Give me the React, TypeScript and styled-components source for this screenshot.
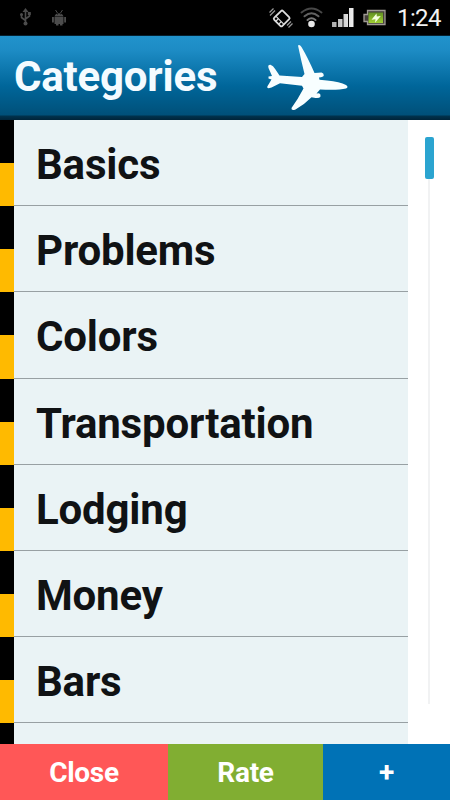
import React from "react";
import styled, { createGlobalStyle } from "styled-components";

const Global = createGlobalStyle`
  * { box-sizing: border-box; }
  html, body { margin: 0; padding: 0; background: #fff; }
  body { font-family: Roboto, "Liberation Sans", sans-serif; overflow: hidden; }
`;

const Screen = styled.div`
  width: 450px;
  height: 800px;
  display: flex;
  flex-direction: column;
  overflow: hidden;
`;

const StatusBar = styled.div`
  flex: none;
  height: 36px;
  background: #000;
  display: flex;
  align-items: center;
  justify-content: space-between;
  border-bottom: 1px solid #06202f;
`;

const Tray = styled.div`
  display: flex;
  align-items: center;
`;

const Glyph = styled.svg`
  display: block;
  flex: none;
`;

const Clock = styled.span`
  color: #f2f2f2;
  font-size: 24px;
  line-height: 36px;
  width: 44px;
  margin-left: 10px;
  margin-right: 9px;
  padding-top: 1px;
  white-space: nowrap;
  letter-spacing: -0.6px;
`;

const Header = styled.header`
  flex: none;
  height: 84px;
  display: flex;
  align-items: flex-start;
  background: linear-gradient(#2193cc 0, #1d8cc5 14px, #00669a 50px, #005079 79px, #00324d 80px, #002439 84px);
`;

const Title = styled.h1`
  margin: 0 0 0 14px;
  width: 252px;
  font-size: 42px;
  line-height: 82px;
  font-weight: 700;
  letter-spacing: -0.2px;
  color: #f4fbff;
`;

const Content = styled.main`
  flex: none;
  height: 624px;
  display: flex;
  background: #fff;
  overflow: hidden;
`;

const List = styled.ul`
  margin: 0;
  padding: 0;
  list-style: none;
  width: 408px;
`;

const Row = styled.li`
  height: 86.2px;
  display: flex;
`;

const Stripe = styled.div`
  width: 14px;
  background: linear-gradient(#000 50%, #ffba00 50%);
`;

const Label = styled.div`
  flex: 1;
  padding-left: 22px;
  background: #eaf3f5;
  border-bottom: 1px solid #98a0a3;
  color: #101214;
  font-size: 42px;
  line-height: 89px;
  font-weight: 700;
  letter-spacing: -0.18px;
  white-space: nowrap;
`;

const Gutter = styled.div`
  flex: 1;
  display: flex;
  flex-direction: column;
  align-items: center;
  padding-top: 17px;
`;

const Thumb = styled.div`
  width: 9px;
  height: 42px;
  border-radius: 2px;
  background: #2ba4d0;
`;

const Track = styled.div`
  width: 2px;
  height: 525px;
  margin-right: 1px;
  background: #f1f2f3;
`;

const Actions = styled.footer`
  flex: none;
  height: 56px;
  display: flex;
`;

const Action = styled.button<{ $color: string; $width: number }>`
  width: ${(p) => p.$width}px;
  border: 0;
  padding: 2px 0 0;
  background: ${(p) => p.$color};
  color: #fff;
  font-family: inherit;
  font-weight: 700;
  font-size: 28px;
  line-height: 54px;
  letter-spacing: -0.3px;
`;

const categories = ["Basics", "Problems", "Colors", "Transportation", "Lodging", "Money", "Bars", ""];

const DeviceIcons = () => (
  <Glyph width="80" height="35" viewBox="0 0 80 35">
    <g stroke="#4c4c4c" fill="none" strokeWidth="1.600">
      <path d="M25.500 11V24M21.500 14v3.500l4 3M29.500 13v3l-4 3" />
    </g>
    <g fill="#4c4c4c">
      <path d="M25.500 8l3 4h-6z" />
      <circle cx="25.500" cy="23.500" r="2" />
      <circle cx="21.500" cy="14.500" r="1.500" />
      <path d="M27.800 12h3v3h-3z" />
      <path d="M54.500 16.500a4.700 4.500 0 0 1 9 0zM54.500 17h9v7h-9zM52 17h1.900v5.500H52zM64.200 17H66v5.500h-1.800zM56 23h2.500v2.500H56zM60 23h2.500v2.500H60z" />
      <path d="M55.500 10l2 3M62.500 10l-2 3" stroke="#4c4c4c" />
    </g>
    <path d="M57 14h.8M60.400 14h.8" stroke="#000" />
  </Glyph>
);

const SystemIcons = () => (
  <Glyph width="118" height="35" viewBox="269 0 118 35">
    <defs>
      <linearGradient id="bars" x1="0" x2="1">
        <stop offset="0" stopColor="#aaa" />
        <stop offset="1" stopColor="#f1f1f1" />
      </linearGradient>
      <linearGradient id="charge" x2="0" y2="1">
        <stop offset="0" stopColor="#629022" />
        <stop offset="1" stopColor="#a0d032" />
      </linearGradient>
    </defs>
    <g transform="rotate(45 281.500 18.300)" fill="none" stroke="#ddd">
      <rect x="276" y="12" width="11.500" height="12.500" rx="1.500" strokeWidth="1.800" />
      <path d="M276 20.800h11.500" strokeWidth="1.200" />
      <path d="M279.600 21v3M283.700 21v3" strokeWidth="1.200" />
    </g>
    <path d="M270 15.500l5-5M269.500 12.500l4-4M287 25.500l4-4M288.500 27.500l4-4" stroke="#999" strokeWidth="1.200" />
    <g fill="none" strokeWidth="2" strokeLinecap="round">
      <path d="M301.500 12.500q10-8 20 0" stroke="#484848" />
      <path d="M304.500 16.300q7-6 14 0" stroke="#626262" />
      <path d="M307.500 20q4-3.500 8 0" stroke="#777" />
    </g>
    <circle cx="311.500" cy="24" r="3.300" fill="#e8e8e8" />
    <path d="M332 22h4.500v5H332zM338 19h4.500v8H338zM343.500 14h4.500v13h-4.500zM349 8h4.500v19H349z" fill="url(#bars)" />
    <path d="M367.500 10.500H385v14h-17.500v-3H364v-7h3.500z" fill="#45403b" stroke="#a09a94" strokeWidth="1.300" />
    <path d="M368.500 12.500H383v10.500h-14.500z" fill="url(#charge)" />
    <path d="M376.500 13.500l-5 6.200 4-.5-.5 3.500 5.800-6.700-4 .5z" fill="#f6ffe0" />
  </Glyph>
);

const Plane = () => (
  <Glyph width="84" height="84" viewBox="266 36 84 84">
    <path
      fill="#f8feff"
      d="M298 45.500Q299.500 44 301.500 47Q308 58 314.500 73L321.500 72.500Q323.800 73 323.800 75.300Q323.500 77.300 319 77.500L319.500 79.800L327 80.500Q340 81.500 346 85Q349 87.300 346 88.500Q338 90.500 320 89.500L316.500 93.500L319 93.300Q321 94 320.500 96.500Q319.500 98.500 315.500 98L311.500 97.300Q304 105 295.500 109.500Q291 111 291.500 108Q298 99 303.500 88.500L302 85.700L280 83.300L271.500 87.500Q266.500 89.500 267.300 86.500L271.500 79.500L268.500 78.500V76.500L272 76L268.500 68Q267.500 64.500 270.500 64.700Q273 65.500 275.500 69.500L279.500 75.500L302 77L304.500 74Q301 60 298 45.500Z"
    />
  </Glyph>
);

export default function App() {
  return (
    <Screen>
      <Global />
      <StatusBar>
        <DeviceIcons />
        <Tray>
          <SystemIcons />
          <Clock>1:24</Clock>
        </Tray>
      </StatusBar>
      <Header>
        <Title>Categories</Title>
        <Plane />
      </Header>
      <Content>
        <List>
          {categories.map((name, i) => (
            <Row key={i}>
              <Stripe />
              <Label>{name}</Label>
            </Row>
          ))}
        </List>
        <Gutter>
          <Thumb />
          <Track />
        </Gutter>
      </Content>
      <Actions>
        <Action $color="#ff5757" $width={168}>Close</Action>
        <Action $color="#81ae32" $width={155}>Rate</Action>
        <Action $color="#0072b6" $width={127}>+</Action>
      </Actions>
    </Screen>
  );
}
